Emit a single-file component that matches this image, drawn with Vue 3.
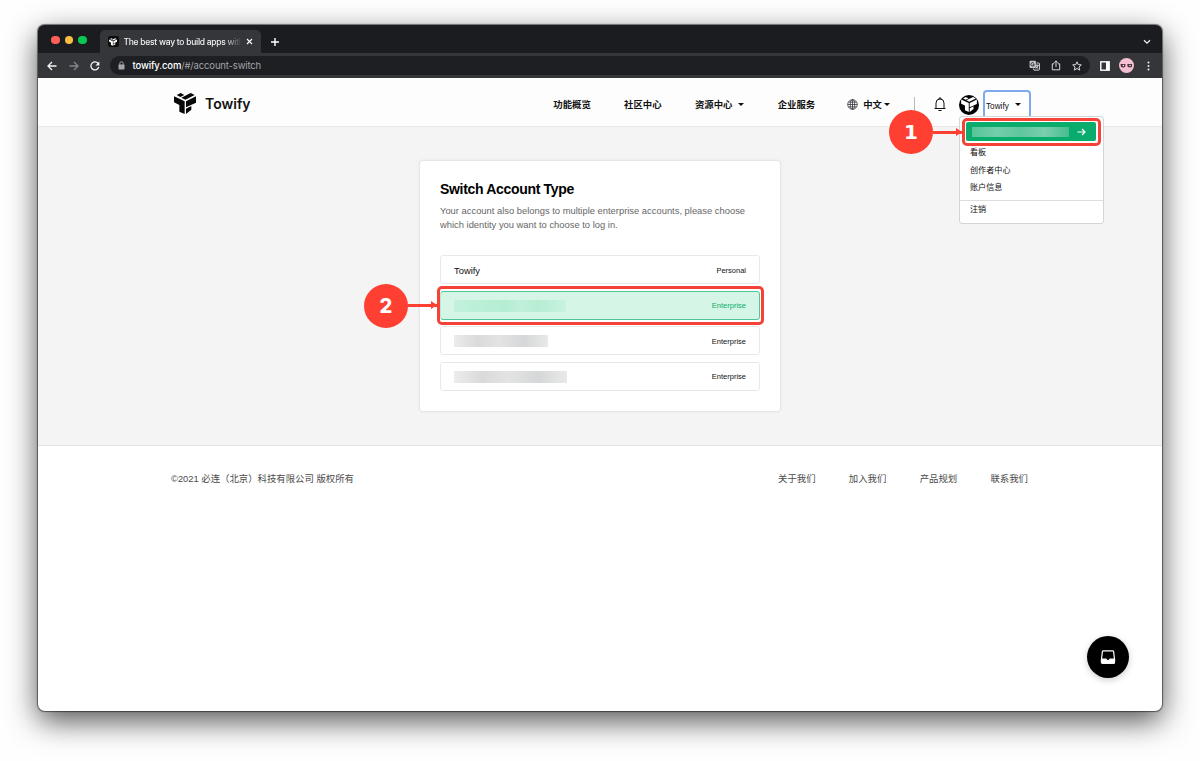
<script setup>
const nav = [
  { label: '功能概览' },
  { label: '社区中心' },
  { label: '资源中心', caret: true },
  { label: '企业服务' },
]

const accounts = [
  { name: 'Towify', type: 'Personal' },
  { type: 'Enterprise', active: true, width: 112 },
  { type: 'Enterprise', width: 94 },
  { type: 'Enterprise', width: 113 },
]

const footerLinks = ['关于我们', '加入我们', '产品规划', '联系我们']
</script>

<template>
  <svg class="symbols" width="0" height="0">
    <symbol id="logo" viewBox="0 0 66 63">
      <path d="M8 6 20 0 31 6 19 12Z" />
      <path d="M22 14 50 0 62 6 34 20Z" />
      <path d="M0 10 32 25V63L16 56V36L0 28Z" />
      <path d="M66 10 36 25V43L66 29Z" />
      <path d="M36 47 52 39V50L36 63Z" />
    </symbol>
  </svg>

  <div class="window">
    <div class="tab-strip">
      <div class="lights">
        <span class="light red"></span>
        <span class="light yellow"></span>
        <span class="light green"></span>
      </div>
      <div class="tab">
        <span class="favicon"><svg width="8" height="8"><use href="#logo" /></svg></span>
        <span class="tab-title">The best way to build apps with</span>
        <svg class="tab-close" width="7" height="7" viewBox="0 0 7 7"><path d="M1 1l5 5M6 1L1 6" /></svg>
      </div>
      <svg class="new-tab" width="10" height="10" viewBox="0 0 10 10"><path d="M5 1v8M1 5h8" /></svg>
      <svg class="tab-menu" width="8" height="6" viewBox="0 0 8 6"><path d="M1 1.2l3 3 3-3" /></svg>
    </div>

    <div class="toolbar">
      <svg class="tool" width="10" height="10" viewBox="0 0 10 10"><path d="M9.5 5H1M5 1L1 5l4 4" /></svg>
      <svg class="tool dim" width="10" height="10" viewBox="0 0 10 10"><path d="M.5 5H9M5 1l4 4-4 4" /></svg>
      <svg class="tool" width="10" height="10" viewBox="0 0 10 10">
        <path d="M8.4 2.9A4 4 0 1 0 8.8 6" />
        <path class="solid" d="M9.4 .5v4H5.5z" />
      </svg>
      <div class="address">
        <svg class="lock" width="7" height="9" viewBox="0 0 7 9">
          <path d="M1.8 4V2.5a1.7 1.7 0 0 1 3.4 0V4" />
          <rect x=".5" y="3.6" width="6" height="4.8" rx=".7" />
        </svg>
        <span class="url"><b>towify.com</b>/#/account-switch</span>
        <svg class="action" width="11" height="11" viewBox="0 0 11 11">
          <rect class="page" x=".6" y=".8" width="6.3" height="7.3" rx=".8" />
          <path d="M7.5 3h2.2q.7 0 .7.7v5.7q0 .7-.7.7H5L4.3 8.5M6.4 5.3h3.2M8.1 4.5v.8M9.2 5.3Q8.7 7.5 6.6 8.4M7 6.6l2.2 2" />
          <path class="glyph" d="M5 3.4A1.7 1.7 0 1 0 5.3 4.7H3.8" />
        </svg>
        <svg class="action" width="10" height="11" viewBox="0 0 10 11"><path d="M3.2 3.8H1.3v6h7.4v-6H6.8M5 7V1M3 2.8l2-2 2 2" /></svg>
        <svg class="action" width="10" height="10" viewBox="0 0 10 10"><path d="M5 .8l1.2 2.8 3.1.3L7 6l.7 3.1L5 7.5 2.3 9.1 3 6 .7 3.9l3.1-.3z" /></svg>
      </div>
      <svg class="panel" width="10" height="10" viewBox="0 0 10 10"><rect x=".8" y=".8" width="8.4" height="8.4" /><path d="M6 1h3v8H6z" /></svg>
      <svg class="profile" width="15" height="15" viewBox="0 0 15 15">
        <circle cx="7.5" cy="7.5" r="7.5" fill="#f5bfd3" />
        <path d="M1.6 6h4.8v2.6q-2.4 2-4.6 0zM8.3 6h4.8v2.6q-2.2 2-4.6 0z" fill="#53333e" />
        <circle cx="4.4" cy="7.5" r=".7" fill="#fff" />
        <circle cx="11" cy="7.5" r=".7" fill="#fff" />
      </svg>
      <svg class="more" width="3" height="10" viewBox="0 0 3 10"><circle cx="1.5" cy="1.5" r="1" /><circle cx="1.5" cy="5" r="1" /><circle cx="1.5" cy="8.5" r="1" /></svg>
    </div>

    <header class="header">
      <svg class="logo" width="22" height="21"><use href="#logo" /></svg>
      <span class="brand">Towify</span>
      <nav class="nav">
        <a v-for="item in nav" :key="item.label" class="nav-item">
          {{ item.label }}<i v-if="item.caret" class="caret"></i>
        </a>
      </nav>
      <div class="language">
        <svg width="11" height="11" viewBox="0 0 11 11">
          <circle cx="5.5" cy="5.5" r="4.8" />
          <ellipse cx="5.5" cy="5.5" rx="2.2" ry="4.8" />
          <path d="M.7 5.5h9.6M1.4 3.2h8.2M1.4 7.8h8.2M5.5.7v9.6" />
        </svg>
        <span>中文</span><i class="caret"></i>
      </div>
      <span class="divider"></span>
      <svg class="bell" width="12" height="15" viewBox="0 0 12 15">
        <path d="M.5 11.5h11M2 11.3V6a4 4 0 0 1 8 0v5.3M5 1.9V1h2v.9M4.4 13.5h3.2" />
      </svg>
      <span class="avatar"><svg width="16" height="15"><use href="#logo" /></svg></span>
      <div class="user">
        <button class="user-button">Towify<i class="caret"></i></button>
        <div class="menu">
          <div class="menu-switch">
            <span class="smear"></span>
            <svg width="9" height="8" viewBox="0 0 9 8"><path d="M.5 4H8M5 1l3 3-3 3" /></svg>
          </div>
          <div class="menu-item">看板</div>
          <div class="menu-item">创作者中心</div>
          <div class="menu-item">账户信息</div>
          <div class="menu-item logout">注销</div>
        </div>
      </div>
    </header>

    <main class="main">
      <section class="card">
        <h1>Switch Account Type</h1>
        <p>Your account also belongs to multiple enterprise accounts, please choose<br>which identity you want to choose to log in.</p>
        <div class="accounts">
          <div v-for="(account, i) in accounts" :key="i" class="account" :class="{ active: account.active }">
            <span v-if="account.name" class="account-name">{{ account.name }}</span>
            <span v-else class="smear" :style="{ width: account.width + 'px' }"></span>
            <span class="account-type">{{ account.type }}</span>
          </div>
        </div>
      </section>
    </main>

    <footer class="footer">
      <span class="copyright">©2021 必连（北京）科技有限公司 版权所有</span>
      <a v-for="link in footerLinks" :key="link">{{ link }}</a>
    </footer>

    <button class="chat">
      <svg width="16" height="16" viewBox="0 0 16 16">
        <path d="M3.2 1.8h9.6q.6 0 .8.8l.9 7.4v3.2q0 1-1 1h-11q-1 0-1-1V10l.9-7.4q.2-.8.8-.8z" />
        <path class="tray" d="M1.5 10.2h4.6q.3 1.5 1.9 1.5t1.9-1.5h4.6v3q0 1-1 1h-11q-1 0-1-1z" />
      </svg>
    </button>
  </div>

  <div class="callout first">
    <span class="badge">1</span><span class="arrow"></span><span class="frame"></span>
  </div>
  <div class="callout second">
    <span class="badge">2</span><span class="arrow"></span><span class="frame"></span>
  </div>
</template>

<style>
body {
  margin: 0;
  background: #fefefe;
}
#app {
  position: relative;
  height: 761px;
  overflow: hidden;
}
</style>

<style scoped>
* { box-sizing: border-box; }
svg {
  flex: none;
  fill: none;
}
.symbols { position: absolute; }

.window {
  position: relative;
  display: flex;
  flex-direction: column;
  width: 1124px;
  height: 686px;
  margin: 0 38px;
  top: 25px;
  border-radius: 7px;
  background: #fff;
  box-shadow: 0 0 1px 0.5px rgba(0, 0, 0, 0.5), 0 10px 30px rgba(0, 0, 0, 0.68);
  font-family: "Liberation Sans", "Noto Sans CJK SC", sans-serif;
  color: #111;
}

/* browser chrome */
.tab-strip {
  display: flex;
  align-items: center;
  height: 28px;
  padding: 0 11px 0 13px;
  border-radius: 6px 6px 0 0;
  background: #1b1c20;
  font-family: Inter, sans-serif;
}
.lights {
  display: flex;
  gap: 5px;
  margin-top: 2px;
}
.light {
  width: 8.5px;
  height: 8.5px;
  border-radius: 50%;
}
.red { background: #fe6059; }
.yellow { background: #fdbd3f; }
.green { background: #0bc653; }
.tab {
  display: flex;
  align-items: center;
  align-self: flex-end;
  width: 161px;
  height: 23px;
  margin-left: 13px;
  padding: 0 8px;
  border-radius: 5px 5px 0 0;
  background: #35363a;
}
.favicon {
  display: flex;
  align-items: center;
  justify-content: center;
  width: 11px;
  height: 11px;
  border-radius: 2px;
  background: #0c0c0d;
}
.favicon svg, .avatar svg { fill: #fff; }
.tab-title {
  width: 118px;
  margin-left: 5px;
  white-space: nowrap;
  font-size: 8.5px;
  font-weight: 500;
  letter-spacing: -0.27px;
  color: #f1f1f2;
  mask-image: linear-gradient(90deg, #000 84%, transparent);
}
.tab-close {
  margin-left: 4px;
  stroke: #fff;
  stroke-width: 1.1;
}
.new-tab {
  margin: 6px 0 0 9px;
  stroke: #fff;
  stroke-width: 1.4;
}
.tab-menu {
  margin: 6px 0 0 auto;
  stroke: #eee;
  stroke-width: 1.3;
}
.toolbar {
  display: flex;
  align-items: center;
  height: 25px;
  padding: 0 12px 0 9px;
  background: #35363a;
}
.tool {
  margin-right: 11.5px;
  stroke: #f4f4f4;
  stroke-width: 1.3;
}
.tool.dim { stroke: #85868a; }
.tool .solid {
  fill: #f4f4f4;
  stroke: none;
}
.address {
  display: flex;
  align-items: center;
  width: 980px;
  height: 19px;
  margin-left: -2px;
  padding: 0 8px 0 8px;
  border-radius: 10px;
  background: #1e1f23;
}
.lock {
  fill: #a2a4a8;
}
.lock path {
  fill: none;
  stroke: #a2a4a8;
}
.url {
  margin: 0 auto 0 8px;
  font: 9.5px Inter, sans-serif;
  letter-spacing: -0.15px;
  color: #a3a4a7;
}
.url b {
  font-weight: 500;
  color: #fff;
}
.action {
  margin-left: 11px;
  stroke: #d9dadc;
}
.action .page {
  fill: #c5c6c8;
  stroke: none;
}
.action .glyph { stroke: #303135; }
.panel {
  margin-left: 10px;
  stroke: #fff;
  stroke-width: 1.4;
}
.panel path {
  fill: #fff;
  stroke: none;
}
.profile { margin-left: 9px; }
.more {
  margin: 0 0 0 auto;
  fill: #eee;
}

/* site header */
.header {
  display: flex;
  align-items: center;
  height: 49px;
  padding: 4px 131px 0 136px;
  border-bottom: 1px solid #e7e7e7;
  background: #fdfdfd;
  font-size: 9.4px;
}
.logo { fill: #080808; margin-top: -2px; }
.brand {
  width: 349px;
  margin: -1px 0 0 9px;
  font: 600 14px Inter, sans-serif;
}
.nav {
  display: flex;
  gap: 33.3px;
  font-weight: 700;
}
.nav-item, .language {
  display: flex;
  align-items: center;
  white-space: nowrap;
}
.caret {
  margin-left: 6px;
  border: 3px solid transparent;
  border-top-color: #111;
  border-bottom: 0;
}
.language {
  margin-left: 32px;
  font-weight: 700;
}
.language svg {
  margin-right: 5px;
  stroke: #222;
  stroke-width: 0.7;
}
.language .caret { margin-left: 2px; }
.divider {
  width: 1px;
  height: 14px;
  margin-left: 24px;
  background: #bbb;
}
.bell {
  margin: 1px 0 0 19px;
  stroke: #111;
}
.avatar {
  display: flex;
  flex: none;
  align-items: center;
  justify-content: center;
  width: 20px;
  height: 20px;
  margin: 1px 0 0 13px;
  border-radius: 50%;
  background: #000;
}
.user {
  position: relative;
  margin: 1px 0 0 4px;
}
.user-button {
  display: flex;
  align-items: center;
  width: 48px;
  height: 29px;
  padding: 3px 0 0 1px;
  border: 2px solid #7faaf0;
  border-radius: 4px;
  background: #fff;
  font: 8.2px "Liberation Sans", sans-serif;
  color: #111;
}
.user-button .caret { margin: -4px 0 0 6px; }
.menu {
  position: absolute;
  z-index: 1;
  top: 26px;
  left: -24px;
  width: 145px;
  height: 108px;
  padding: 5px 0;
  border: 1px solid #d5d5d8;
  border-radius: 3px;
  background: #fff;
  font-size: 8.1px;
}
.menu-switch {
  display: flex;
  align-items: center;
  justify-content: space-between;
  width: 130px;
  height: 19px;
  margin: 0 0 3px 6px;
  padding: 0 10px 0 6px;
  border-radius: 2px;
  background: #09ac6c;
}
.menu-switch svg {
  stroke: #fff;
  stroke-width: 1.2;
}
.menu-item {
  padding-left: 10px;
  line-height: 17.5px;
}
.logout {
  height: 21px;
  margin-top: 3px;
  border-top: 1px solid #dedee0;
}

/* account switch */
.main {
  display: flex;
  justify-content: center;
  height: 319px;
  padding-top: 33px;
  border-bottom: 1px solid #e3e3e3;
  background: #f4f4f4;
}
.card {
  width: 362px;
  height: 252px;
  padding: 20px;
  border: 1px solid #e6e6e6;
  border-radius: 4px;
  background: #fff;
  box-shadow: 0 0 3px rgba(0, 0, 0, 0.06);
}
h1 {
  margin: 0;
  font-size: 14px;
  line-height: 17px;
  letter-spacing: -0.32px;
  color: #000;
}
p {
  margin: 6px 0 23px;
  font-size: 9.4px;
  line-height: 14px;
  white-space: nowrap;
  color: #666;
}
.accounts {
  display: flex;
  flex-direction: column;
  gap: 6.5px;
}
.account {
  display: flex;
  align-items: center;
  justify-content: space-between;
  height: 29px;
  padding: 1px 13px 0;
  border: 1px solid #e8e8e8;
  border-radius: 3px;
}
.account.active {
  border-color: #52c596;
  background: #d5f6e6;
}
.account-name { font-size: 9.4px; }
.account-type { font-size: 7.5px; }
.active .account-type { color: #0aae6c; }
.smear {
  height: 12px;
  background: linear-gradient(90deg, #ececec, #dadada 25%, #e3e3e3 48%, #d5d7d8 75%, #e9e9e9);
}
.active .smear { background: linear-gradient(90deg, #c3f1db, #b4edd2 45%, #c1f0da 60%, #b7edd3 75%, #c8f3df); }
.menu-switch .smear {
  width: 97px;
  height: 10px;
  background: linear-gradient(90deg, #56c496, #74ceab 25%, #5fc69c 50%, #79cfae 75%, #45be8c);
}

.footer {
  display: flex;
  align-items: center;
  gap: 33.3px;
  height: 64px;
  padding: 0 134px 0 133px;
  font-size: 9.4px;
  color: #4b4b4b;
}
.copyright { margin-right: auto; }

.chat {
  position: absolute;
  right: 33px;
  bottom: 33px;
  display: flex;
  align-items: center;
  justify-content: center;
  width: 42px;
  height: 42px;
  padding: 0;
  border: 0;
  border-radius: 50%;
  background: #000;
  box-shadow: 0 2px 7px rgba(0, 0, 0, 0.2);
}
.chat path {
  stroke: #fff;
  stroke-width: 1.2;
  stroke-linejoin: round;
}
.chat .tray { fill: #fff; }

/* step annotations */
.callout {
  position: absolute;
  z-index: 2;
  display: flex;
  align-items: center;
}
.first { left: 889px; top: 110px; }
.second { left: 364px; top: 283.5px; }
.badge {
  display: flex;
  align-items: center;
  justify-content: center;
  width: 44px;
  height: 44px;
  border-radius: 50%;
  background: #fe3f32;
  font: 700 20px "DejaVu Sans", sans-serif;
  color: #fff;
}
.second .badge { font: 800 20px Inter, sans-serif; }
.arrow {
  position: relative;
  width: 29px;
  height: 3px;
  background: #fe3f32;
}
.arrow::after {
  content: '';
  position: absolute;
  right: 0;
  top: -3px;
  border: 4.5px solid transparent;
  border-left: 6px solid #fe3f32;
  border-right: 0;
}
.frame {
  border: 3px solid #f44336;
  border-radius: 5px;
  outline: 1px solid rgba(255, 255, 255, 0.6);
  outline-offset: -4px;
}
.first .frame {
  width: 139px;
  height: 28px;
}
.second .frame {
  width: 327px;
  height: 39px;
}
</style>
